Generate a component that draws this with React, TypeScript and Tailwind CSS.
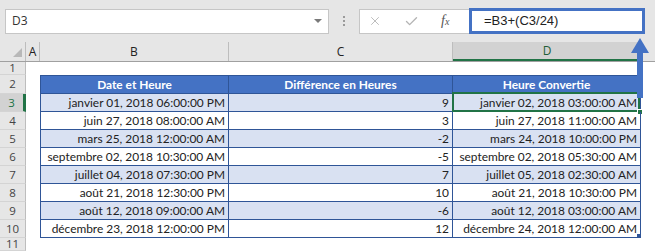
import { X, Check } from 'lucide-react';

const rows = [
    ['janvier 01, 2018 06:00:00 PM', '9', 'janvier 02, 2018 03:00:00 AM'],
    ['juin 27, 2018 08:00:00 AM', '3', 'juin 27, 2018 11:00:00 AM'],
    ['mars 25, 2018 12:00:00 AM', '-2', 'mars 24, 2018 10:00:00 PM'],
    ['septembre 02, 2018 10:30:00 AM', '-5', 'septembre 02, 2018 05:30:00 AM'],
    ['juillet 04, 2018 07:30:00 PM', '7', 'juillet 05, 2018 02:30:00 AM'],
    ['août 21, 2018 12:30:00 PM', '10', 'août 21, 2018 10:30:00 PM'],
    ['août 12, 2018 09:00:00 AM', '-6', 'août 12, 2018 03:00:00 AM'],
    ['décembre 23, 2018 12:00:00 PM', '12', 'décembre 24, 2018 12:00:00 AM'],
];

const RowHead = ({ n, h, active }: { n: number; h: string; active?: boolean }) => (
    <div
        className={`w-[26px] shrink-0 flex items-center justify-center border-b border-[#d4d4d4] text-[11.5px] ${h} ${
            active
                ? 'bg-[#d2d2d2] text-[#217346] border-r-[3px] border-r-[#217346]'
                : 'bg-[#e6e6e6] text-[#444] border-r border-r-[#bdbdbd]'
        }`}
    >
        {n}
    </div>
);

const cell = "font-['Lato',sans-serif] text-[11.9px] text-[#222] flex items-center justify-end pr-[3px] border-r border-[#2f5597] whitespace-nowrap";

const App = () => {
    return (
        <div className="relative w-[655px] h-[251px] overflow-hidden bg-white font-['Open_Sans',sans-serif]">
            {/* formula bar */}
            <div className="flex items-center h-[42px] bg-[#e6e6e6] pl-[5px]">
                <div className="w-[324px] h-[25px] bg-white border border-[#c6c6c6] flex items-center justify-between pl-[6px] pr-[6px] text-[12px] text-[#333]">
                    <span>D3</span>
                    <svg width="8" height="5" viewBox="0 0 8 5">
                        <polygon points="0,0 8,0 4,4" fill="#7a7a7a" />
                    </svg>
                </div>
                <div className="w-[30px] flex flex-col items-center gap-[2px]">
                    <span className="w-[2px] h-[2px] bg-[#9a9a9a]" />
                    <span className="w-[2px] h-[2px] bg-[#9a9a9a]" />
                    <span className="w-[2px] h-[2px] bg-[#9a9a9a]" />
                </div>
                <div className="w-[110px] h-[25px] bg-white border border-[#c6c6c6] border-r-0 flex items-center">
                    <X className="w-[14px] h-[14px] text-[#b4b4b4] ml-[8px]" strokeWidth={1.5} />
                    <Check className="w-[15px] h-[15px] text-[#b4b4b4] ml-[22px]" strokeWidth={2.2} />
                    <span className="ml-[22px] font-['Liberation_Serif',serif] italic text-[#555] text-[14px] leading-none">
                        f<span className="text-[10px]">x</span>
                    </span>
                </div>
                <div className="w-[176px] h-[26px] bg-white border-[3px] border-[#4472c4] flex items-center pl-[12px] text-[13px] text-[#222] font-['Liberation_Sans',sans-serif]">
                    =B3+(C3/24)
                </div>
            </div>

            {/* column headers */}
            <div className="flex h-[20px] bg-[#e6e6e6] border-b border-[#a0a0a0] text-[12px] text-[#222]">
                <div className="w-[26px] shrink-0 border-r border-[#bdbdbd] flex items-end justify-end pr-[3px] pb-[4px]">
                    <svg width="9" height="9" viewBox="0 0 9 9">
                        <polygon points="9,0 9,9 0,9" fill="#b8b8b8" />
                    </svg>
                </div>
                <div className="w-[14px] shrink-0 border-r border-[#bdbdbd] flex items-center justify-center">A</div>
                <div className="w-[189px] shrink-0 border-r border-[#bdbdbd] flex items-center justify-center">B</div>
                <div className="w-[224px] shrink-0 border-r border-[#bdbdbd] flex items-center justify-center">C</div>
                <div className="w-[188px] shrink-0 bg-[#d2d2d2] border-b-2 border-[#217346] flex items-center justify-center text-[#1e5e38]">D</div>
                <div className="flex-1 border-l border-[#bdbdbd]" />
            </div>

            {/* row 1 */}
            <div className="flex h-[13px]">
                <RowHead n={1} h="h-[13px]" />
            </div>

            {/* row 2: table header */}
            <div className="flex h-[19px]">
                <RowHead n={2} h="h-[19px]" />
                <div className="w-[14px] shrink-0" />
                <div className="flex border-y border-[#2f5597] bg-[#4472c4] text-white font-bold font-['Lato',sans-serif] text-[11.9px]">
                    <div className="w-[189px] border-x border-[#2f5597] flex items-center justify-center">Date et Heure</div>
                    <div className="w-[224px] border-r border-[#2f5597] flex items-center justify-center">Différence en Heures</div>
                    <div className="w-[188px] border-r border-[#2f5597] flex items-center justify-center">Heure Convertie</div>
                </div>
            </div>

            {rows.map((r, i) => (
                <div key={i} className="flex h-[18px]">
                    <RowHead n={i + 3} h="h-[18px]" active={i === 0} />
                    <div className="w-[14px] shrink-0" />
                    <div className={`flex border-b border-[#2f5597] ${i % 2 === 0 ? 'bg-[#d9e1f2]' : 'bg-white'}`}>
                        <div className={`${cell} w-[189px] border-l`}>{r[0]}</div>
                        <div className={`${cell} w-[224px]`}>{r[1]}</div>
                        <div className={`${cell} w-[188px] relative`}>
                            {r[2]}
                            {i === 0 && (
                                <>
                                    <div className="absolute -left-px -top-[2px] right-0 -bottom-px border-2 border-[#217346]" />
                                    <div className="absolute -right-[3px] -bottom-[4px] w-[6px] h-[6px] bg-[#217346] border border-white" />
                                </>
                            )}
                            {i === 7 && (
                                <div className="absolute -right-px -bottom-px w-[4px] h-[4px] bg-[#2f5597]" />
                            )}
                        </div>
                    </div>
                </div>
            ))}

            {/* row 11 */}
            <div className="flex h-[13px]">
                <RowHead n={11} h="h-[13px]" />
            </div>

            {/* arrow from formula box */}
            <svg className="absolute left-[628px] top-[36px]" width="22" height="64" viewBox="0 0 22 64">
                <polygon points="12,2 3,17 21,17" fill="#4472c4" />
                <rect x="9" y="17" width="6" height="45" fill="#4472c4" />
            </svg>
        </div>
    );
};

export default App;
